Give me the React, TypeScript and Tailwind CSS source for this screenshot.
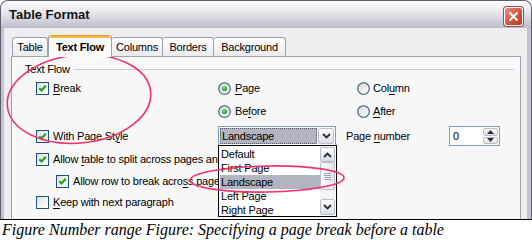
import React from 'react'

function Mn({ t, u }: { t: string; u: number }) {
  return (
    <span className="whitespace-nowrap">
      {t.slice(0, u)}
      <span className="underline decoration-1 underline-offset-[2px]">{t[u]}</span>
      {t.slice(u + 1)}
    </span>
  )
}

function CheckBox({ on }: { on?: boolean }) {
  return (
    <span className="flex h-[13px] w-[13px] shrink-0 items-center justify-center border border-[#1c5180] bg-gradient-to-br from-[#dcdcd7] via-[#f2f2ee] to-white">
      {on && (
        <svg width="9" height="9" viewBox="0 0 9 9">
          <path d="M1.3 4.3 L3.5 6.5 L7.8 1.8" fill="none" stroke="#21a121" strokeWidth="2.2" />
        </svg>
      )}
    </span>
  )
}

function Radio({ on }: { on?: boolean }) {
  return (
    <svg width="13" height="13" viewBox="0 0 13 13" className="shrink-0">
      <defs>
        <linearGradient id="rg" x1="0" y1="0" x2="1" y2="1">
          <stop offset="0" stopColor="#d6d6d2" />
          <stop offset="1" stopColor="#ffffff" />
        </linearGradient>
        <radialGradient id="dot" cx="0.4" cy="0.35" r="0.7">
          <stop offset="0" stopColor="#7be07b" />
          <stop offset="1" stopColor="#1c9a1c" />
        </radialGradient>
      </defs>
      <circle cx="6.5" cy="6.5" r="5.8" fill="url(#rg)" stroke="#2c5a86" strokeWidth="1.1" />
      {on && <circle cx="6.5" cy="6.5" r="2.6" fill="url(#dot)" />}
    </svg>
  )
}

function Chevron({ up }: { up?: boolean }) {
  return (
    <svg width="9" height="6" viewBox="0 0 9 6">
      <path
        d={up ? 'M1 5 L4.5 1.5 L8 5' : 'M1 1 L4.5 4.5 L8 1'}
        fill="none"
        stroke="#2b2b3a"
        strokeWidth="1.8"
      />
    </svg>
  )
}

function Tri({ up }: { up?: boolean }) {
  return (
    <svg width="7" height="4" viewBox="0 0 7 4">
      <path d={up ? 'M0 4 L3.5 0 L7 4Z' : 'M0 0 L3.5 4 L7 0Z'} fill="#2b2b3a" />
    </svg>
  )
}

export default function App() {
  return (
    <div className="relative h-[242px] w-[532px] overflow-hidden bg-white font-['Liberation_Sans',Arial,sans-serif] text-[11px] tracking-[-0.2px] text-black">
      {/* window */}
      <div className="flex h-[219px] flex-col overflow-hidden rounded-t-[8px] border border-b-0 border-[#5d5d6e] bg-[#c3c3d1]">
        {/* title bar */}
        <div className="flex h-[27px] shrink-0 items-center bg-gradient-to-b from-[#fdfdfe] via-[#e2e2e9] to-[#bdbdcb] pl-[8px] pr-[8px]">
          <span className="flex-1 text-[13px] font-bold tracking-normal text-[#151515]">Table Format</span>
          <div className="mt-[4px] flex h-[19px] w-[19px] items-center justify-center rounded-[3px] border border-white bg-gradient-to-br from-[#e88f7c] via-[#d45a44] to-[#b6372a] shadow-[0_0_0_1px_#a04a40]">
            <svg width="11" height="11" viewBox="0 0 11 11">
              <path d="M1.5 1.5 L9.5 9.5 M9.5 1.5 L1.5 9.5" stroke="white" strokeWidth="2" />
            </svg>
          </div>
        </div>

        {/* client */}
        <div className="ml-[3px] mr-[4px] flex flex-1 flex-col bg-[#eeeef1] pt-[7px]">
          {/* tabs */}
          <div className="flex h-[21px] items-end pl-[8px] text-[11px]">
            <div className="flex h-[19px] w-[36px] items-center justify-center rounded-t-[3px] border border-b-0 border-[#9aa3ad] bg-gradient-to-b from-white to-[#ebebee]">
              Table
            </div>
            <div className="relative z-10 -mb-px flex h-[22px] w-[64px] flex-col rounded-t-[3px] border-x border-[#9aa3ad] bg-[#fbfbfc]">
              <div className="h-[3px] rounded-t-[3px] bg-gradient-to-b from-[#e0912c] to-[#ffcf4a]" />
              <div className="flex flex-1 items-start justify-center pt-[1px] font-bold">Text Flow</div>
            </div>
            <div className="flex h-[19px] w-[51px] items-center justify-center rounded-t-[3px] border border-b-0 border-l-0 border-[#9aa3ad] bg-gradient-to-b from-white to-[#ebebee]">
              Columns
            </div>
            <div className="flex h-[19px] w-[51px] items-center justify-center rounded-t-[3px] border border-b-0 border-l-0 border-[#9aa3ad] bg-gradient-to-b from-white to-[#ebebee]">
              Borders
            </div>
            <div className="flex h-[19px] w-[72px] items-center justify-center rounded-t-[3px] border border-b-0 border-l-0 border-[#9aa3ad] bg-gradient-to-b from-white to-[#ebebee]">
              Background
            </div>
          </div>

          {/* tab page */}
          <div className="relative ml-[7px] flex w-[510px] flex-1 flex-col border border-b-0 border-[#9aa3ad] bg-[#f8f8f8]">
            {/* group header */}
            <div className="mt-[5px] flex h-[14px] items-center pl-[13px] pr-[6px]">
              <span>Text Flow</span>
              <div className="ml-[4px] h-px flex-1 bg-[#c9c9d2]" />
            </div>

            {/* row 1 */}
            <div className="flex h-[24px] items-center pl-[24px]">
              <div className="flex w-[182px] items-center gap-[4px]">
                <CheckBox on />
                <Mn t="Break" u={0} />
              </div>
              <div className="flex w-[139px] items-center gap-[4px]">
                <Radio on />
                <Mn t="Page" u={0} />
              </div>
              <div className="flex items-center gap-[3px]">
                <Radio />
                <Mn t="Column" u={3} />
              </div>
            </div>

            {/* row 2 */}
            <div className="flex h-[22px] items-center pl-[206px]">
              <div className="flex w-[139px] items-center gap-[4px]">
                <Radio on />
                <Mn t="Before" u={2} />
              </div>
              <div className="flex items-center gap-[3px]">
                <Radio />
                <Mn t="After" u={0} />
              </div>
            </div>

            {/* row 3 */}
            <div className="flex h-[28px] items-center pl-[24px]">
              <div className="flex w-[182px] items-center gap-[4px]">
                <CheckBox on />
                <Mn t="With Page Style" u={12} />
              </div>
              <div className="flex h-[20px] w-[118px] items-center border border-[#7f9db9] bg-white p-px">
                <div className="flex h-full flex-1 items-center bg-[#b2b4bf] pl-[2px] outline-1 -outline-offset-1 outline-dotted outline-[#55556a]">
                  Landscape
                </div>
                <div className="ml-px flex h-full w-[16px] items-center justify-center rounded-[2px] border border-[#b9bdcc] bg-gradient-to-b from-white to-[#dcdde5]">
                  <Chevron />
                </div>
              </div>
              <div className="ml-[10px] w-[103px]">
                <Mn t="Page number" u={5} />
              </div>
              <div className="flex h-[20px] w-[51px] items-center border border-[#7f9db9] bg-white pl-[3px]">
                <span className="flex-1">0</span>
                <div className="flex h-full w-[17px] flex-col gap-px p-px">
                  <div className="flex flex-1 items-center justify-center rounded-[2px] border border-[#b9bdcc] bg-gradient-to-b from-white to-[#dcdde5]">
                    <Tri up />
                  </div>
                  <div className="flex flex-1 items-center justify-center rounded-[2px] border border-[#b9bdcc] bg-gradient-to-b from-white to-[#dcdde5]">
                    <Tri />
                  </div>
                </div>
              </div>
            </div>

            {/* row 4 */}
            <div className="flex h-[18px] items-center gap-[4px] pl-[24px]">
              <CheckBox on />
              <Mn t="Allow table to split across pages and columns" u={6} />
            </div>

            {/* row 5 */}
            <div className="flex h-[26px] items-center gap-[4px] pl-[44px]">
              <CheckBox on />
              <Mn t="Allow row to break across pages and columns" u={23} />
            </div>

            {/* row 6 */}
            <div className="flex h-[16px] items-center gap-[4px] pl-[24px]">
              <CheckBox />
              <Mn t="Keep with next paragraph" u={0} />
            </div>

            {/* open list of page styles */}
            <div className="absolute left-[206px] top-[88px] flex h-[72px] w-[119px] border border-black bg-white p-px">
              <div className="flex flex-1 flex-col">
                <div className="h-[14px] pl-px leading-[14px]">Default</div>
                <div className="h-[14px] pl-px leading-[14px]">First Page</div>
                <div className="h-[14px] bg-[#b2b4bf] pl-px leading-[14px]">Landscape</div>
                <div className="h-[14px] pl-px leading-[14px]">Left Page</div>
                <div className="h-[14px] pl-px leading-[14px]">Right Page</div>
              </div>
              <div className="flex w-[15px] flex-col bg-[#f4f4f6]">
                <div className="flex h-[15px] items-center justify-center rounded-[2px] border border-[#b9bdcc] bg-gradient-to-b from-white to-[#dcdde5]">
                  <Chevron up />
                </div>
                <div className="flex h-[28px] flex-col items-center justify-center gap-px rounded-[2px] border border-[#b9bdcc] bg-gradient-to-r from-white to-[#e2e3ea]">
                  <div className="h-px w-[7px] bg-[#9ea2b4]" />
                  <div className="h-px w-[7px] bg-[#9ea2b4]" />
                  <div className="h-px w-[7px] bg-[#9ea2b4]" />
                  <div className="h-px w-[7px] bg-[#9ea2b4]" />
                </div>
                <div className="flex-1" />
                <div className="flex h-[16px] items-center justify-center rounded-[2px] border border-[#b9bdcc] bg-gradient-to-b from-white to-[#dcdde5]">
                  <Chevron />
                </div>
              </div>
            </div>
          </div>
        </div>
      </div>

      <div className="h-px bg-black" />

      {/* caption */}
      <div className="pl-[2px] font-['Liberation_Serif',serif] text-[16px] italic leading-[19px] tracking-normal">
        Figure Number range Figure: Specifying a page break before a table
      </div>

      {/* hand-drawn annotations */}
      <svg className="pointer-events-none absolute left-0 top-0" width="532" height="242">
        <ellipse cx="79" cy="99" rx="72" ry="44" transform="rotate(-6 79 99)" fill="none" stroke="#f0336e" strokeWidth="1.6" />
        <ellipse cx="267" cy="179" rx="77" ry="13" transform="rotate(-1 267 179)" fill="none" stroke="#f0336e" strokeWidth="1.6" />
      </svg>
    </div>
  )
}
